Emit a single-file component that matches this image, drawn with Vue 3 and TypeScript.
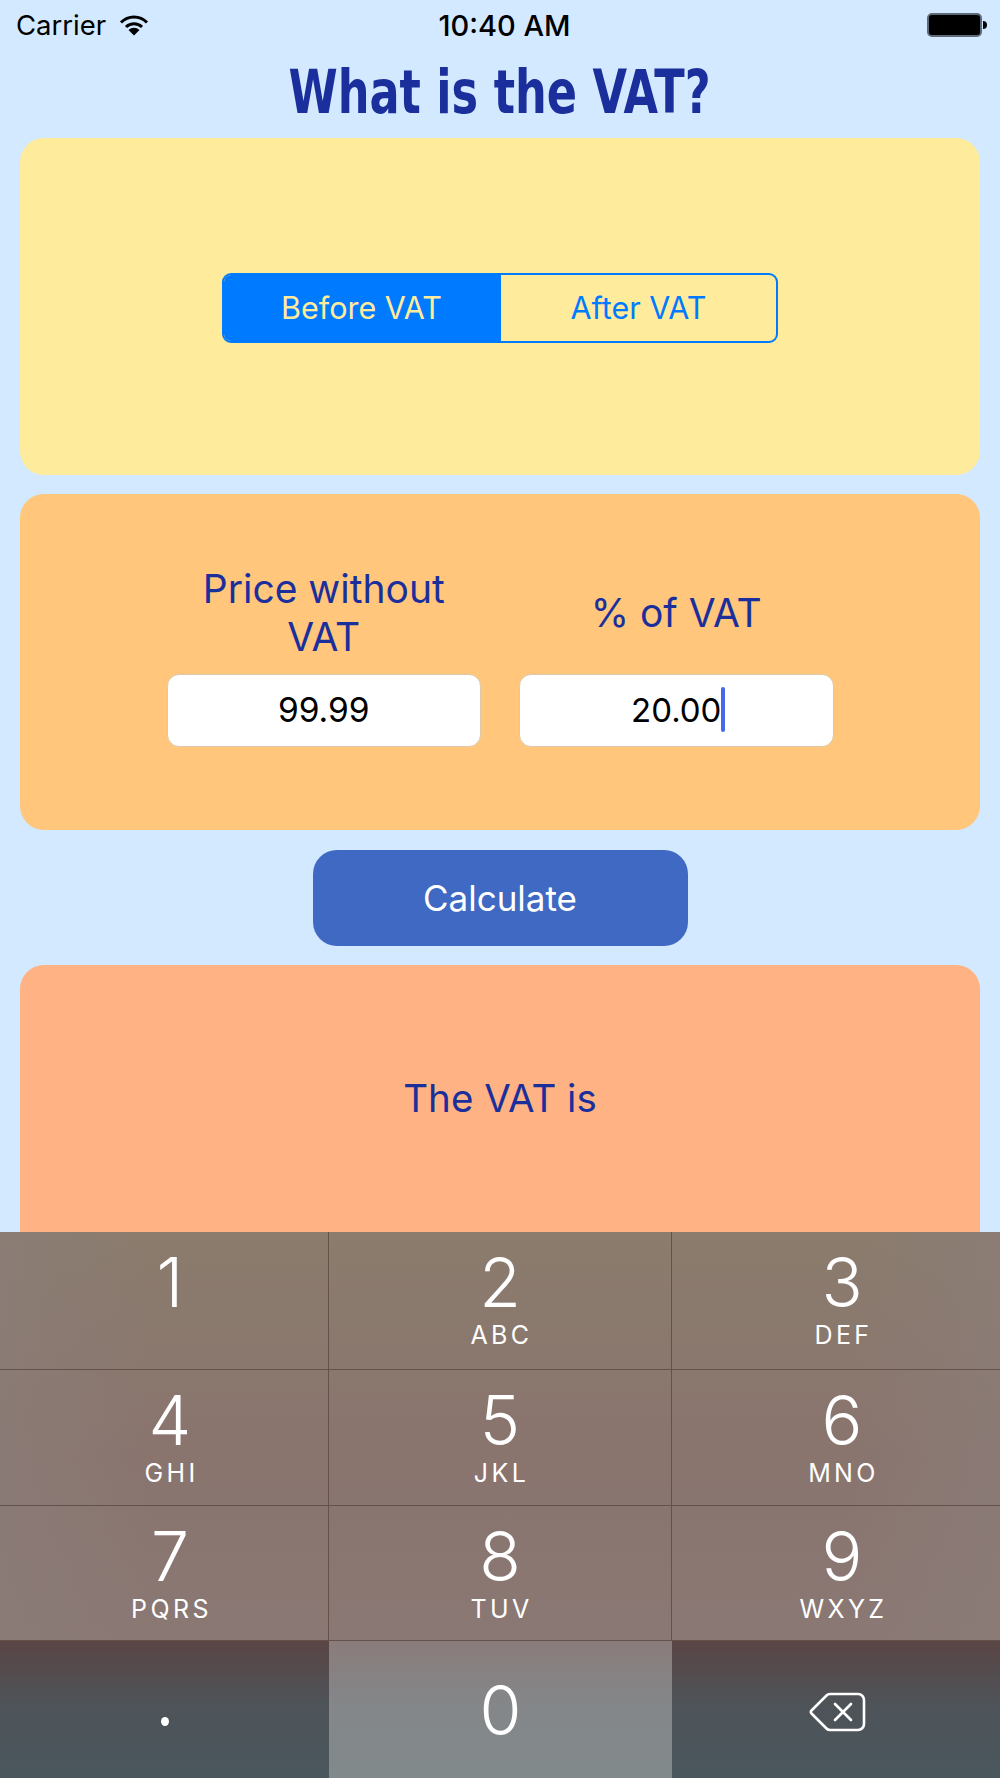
<script setup lang="ts">
interface Key {
  digit: string;
  letters: string;
  side?: boolean;
}

const keys: Key[] = [
  { digit: '1', letters: '', side: true },
  { digit: '2', letters: 'ABC' },
  { digit: '3', letters: 'DEF', side: true },
  { digit: '4', letters: 'GHI', side: true },
  { digit: '5', letters: 'JKL' },
  { digit: '6', letters: 'MNO', side: true },
  { digit: '7', letters: 'PQRS', side: true },
  { digit: '8', letters: 'TUV' },
  { digit: '9', letters: 'WXYZ', side: true },
];
</script>

<template>
  <div class="screen">
    <div class="status">
      <div class="status-left">
        <span>Carrier</span>
        <svg class="wifi" width="30" height="22" viewBox="0 0 30 22">
          <path d="M2 8.5 A18 18 0 0 1 28 8.5" fill="none" stroke="#000" stroke-width="3" />
          <path d="M7 13 A11.5 11.5 0 0 1 23 13" fill="none" stroke="#000" stroke-width="3" />
          <path d="M9.5 16 L15 21.5 L20.5 16 A8 8 0 0 0 9.5 16 Z" fill="#000" />
        </svg>
      </div>
      <div class="time">10:40 AM</div>
      <div class="battery">
        <div class="battery-body"></div>
        <div class="battery-nub"></div>
      </div>
    </div>

    <h1 class="title">What is the VAT?</h1>

    <section class="card card-yellow">
      <div class="segment">
        <div class="seg seg-on"><span class="seg-text">Before VAT</span></div>
        <div class="seg"><span class="seg-text">After VAT</span></div>
      </div>
    </section>

    <section class="card card-orange">
      <div class="fields">
        <div class="field">
          <div class="label">Price without VAT</div>
          <div class="input">99.99</div>
        </div>
        <div class="field">
          <div class="label">% of VAT</div>
          <div class="input"><span class="typed">20.00<i class="caret"></i></span></div>
        </div>
      </div>
    </section>

    <button class="calc">Calculate</button>

    <section class="card card-salmon">
      <div class="result">The VAT is</div>
    </section>

    <div class="keyboard">
      <div class="rows">
        <div v-for="k in keys" :key="k.digit" class="key" :class="{ side: k.side }">
          <span class="digit">{{ k.digit }}</span>
          <span class="letters">{{ k.letters }}</span>
        </div>
      </div>
      <div class="bottom">
        <div class="bkey"><span class="dot"></span></div>
        <div class="bkey zero"><span class="digit">0</span></div>
        <div class="bkey">
          <svg class="back" width="58" height="42" viewBox="0 0 58 42">
            <path
              d="M22 3 H50 A6 6 0 0 1 56 9 V33 A6 6 0 0 1 50 39 H22 A5 5 0 0 1 18.5 37.5 L3.5 22.5 A2 2 0 0 1 3.5 19.5 L18.5 4.5 A5 5 0 0 1 22 3 Z"
              fill="none"
              stroke="#fff"
              stroke-width="2.6"
              stroke-linejoin="round"
            />
            <path d="M27 13 L43 29 M43 13 L27 29" fill="none" stroke="#fff" stroke-width="2.6" stroke-linecap="round" />
          </svg>
        </div>
      </div>
    </div>
  </div>
</template>

<style>
html,
body {
  margin: 0;
  background: #d2e9ff;
}
</style>

<style scoped>
.screen {
  position: relative;
  width: 1000px;
  height: 1778px;
  overflow: hidden;
  background: #d2e9ff;
  font-family: Inter, "Liberation Sans", sans-serif;
  color: #1b2f9c;
  display: flex;
  flex-direction: column;
  align-items: center;
}

.status {
  width: 100%;
  height: 50px;
  flex: none;
  box-sizing: border-box;
  padding: 0 13px 0 16px;
  display: flex;
  align-items: center;
  justify-content: space-between;
  color: #000;
  font-size: 27.5px;
}

.status-left {
  width: 200px;
  display: flex;
  align-items: center;
  gap: 13px;
}

.time {
  margin-left: 6px;
  font-weight: 500;
  font-size: 29px;
}

.battery {
  width: 200px;
  display: flex;
  justify-content: flex-end;
  align-items: center;
  gap: 1px;
}

.battery-body {
  width: 51px;
  height: 20px;
  background: #000;
  border: 2px solid #5d6b78;
  border-radius: 5px;
}

.battery-nub {
  width: 4px;
  height: 8px;
  background: #000;
  border-radius: 0 4px 4px 0;
}

.title {
  flex: none;
  height: 88px;
  margin: 0;
  font-family: "DejaVu Sans Condensed", "DejaVu Sans", sans-serif;
  font-stretch: condensed;
  font-size: 60px;
  font-weight: 700;
  line-height: 84px;
  color: #1b2f9c;
  transform: scaleX(0.826);
}

.card {
  flex: none;
  width: 960px;
  height: 336px;
  border-radius: 24px;
  display: flex;
  justify-content: center;
  align-items: center;
}

.card-yellow {
  height: 337px;
  background: #ffeb9c;
}

.card-orange {
  margin-top: 19px;
  background: #ffc67c;
}

.card-salmon {
  margin-top: 19px;
  background: #ffb283;
  align-items: flex-start;
}

.segment {
  width: 556px;
  height: 70px;
  margin-top: 3px;
  box-sizing: border-box;
  border: 2px solid #007aff;
  border-radius: 9px;
  display: flex;
  overflow: hidden;
  font-size: 30.5px;
  color: #007aff;
}

.seg {
  flex: 1;
  display: flex;
  align-items: center;
  justify-content: center;
}

.seg-text {
  margin-bottom: 2px;
}

.seg-on {
  padding-right: 2px;
  background: #007aff;
  color: #ffeb9c;
}

.fields {
  display: flex;
  gap: 38px;
  margin-top: -6px;
}

.field {
  width: 314.5px;
  display: flex;
  flex-direction: column;
  align-items: center;
  gap: 6px;
}

.label {
  width: 280px;
  height: 96px;
  box-sizing: border-box;
  padding-bottom: 14px;
  display: flex;
  align-items: center;
  justify-content: center;
  text-align: center;
  font-size: 39px;
  line-height: 48px;
}

.input {
  width: 100%;
  height: 73px;
  box-sizing: border-box;
  background: #fff;
  border: 1px solid #dcc7a8;
  border-radius: 12px;
  display: flex;
  align-items: center;
  justify-content: center;
  color: #000;
  font-size: 33.5px;
}

.typed {
  position: relative;
  font-size: 33px;
}

.caret {
  position: absolute;
  right: -4px;
  top: -3px;
  width: 4px;
  height: 45px;
  background: #4569e8;
  border-radius: 2px;
}

.calc {
  flex: none;
  width: 375px;
  height: 96px;
  margin-top: 20px;
  border: none;
  border-radius: 24px;
  background: #3f69c2;
  color: #fff;
  font-family: inherit;
  font-size: 35px;
}

.result {
  margin-top: 110px;
  height: 47px;
  line-height: 47px;
  font-size: 38.5px;
}

.keyboard {
  position: absolute;
  left: 0;
  right: 0;
  bottom: 0;
  height: 546px;
  display: flex;
  flex-direction: column;
  color: #fff;
}

.rows {
  height: 409px;
  display: grid;
  grid-template-columns: 329px 343px 328px;
  grid-template-rows: 138px 136px 135px;
  background: linear-gradient(90deg, rgba(139, 126, 122, 0.6), rgba(139, 126, 122, 0) 15%, rgba(139, 126, 122, 0) 85%, rgba(139, 126, 122, 0.6)),
    linear-gradient(180deg, #8b7c6d, #89746e 55%, #8a7874);
}

.key {
  box-sizing: border-box;
  padding-top: 10px;
  border-right: 1px solid #66504a;
  border-bottom: 1px solid #66504a;
  display: flex;
  flex-direction: column;
  align-items: center;
}

.key:nth-child(3n) {
  border-right: none;
}

.key.side {
  padding-left: 12px;
}

.digit {
  font-size: 68px;
  font-weight: 300;
  line-height: 80px;
}

.letters {
  margin-left: 3px;
  font-size: 25px;
  line-height: 26px;
  letter-spacing: 3.4px;
}

.bottom {
  flex: 1;
  display: grid;
  grid-template-columns: 329px 343px 328px;
  background: linear-gradient(180deg, #5a4545, #4e5358 45%, #4a585e);
}

.bkey {
  display: flex;
  align-items: center;
  justify-content: center;
}

.bkey.zero {
  background: linear-gradient(180deg, #8a7c7b, #84878a 50%, #81898b);
}

.dot {
  width: 8px;
  height: 9px;
  margin-top: 23px;
  border-radius: 50%;
  background: #fff;
}

.back {
  margin: 5px 0 0 2px;
}
</style>
